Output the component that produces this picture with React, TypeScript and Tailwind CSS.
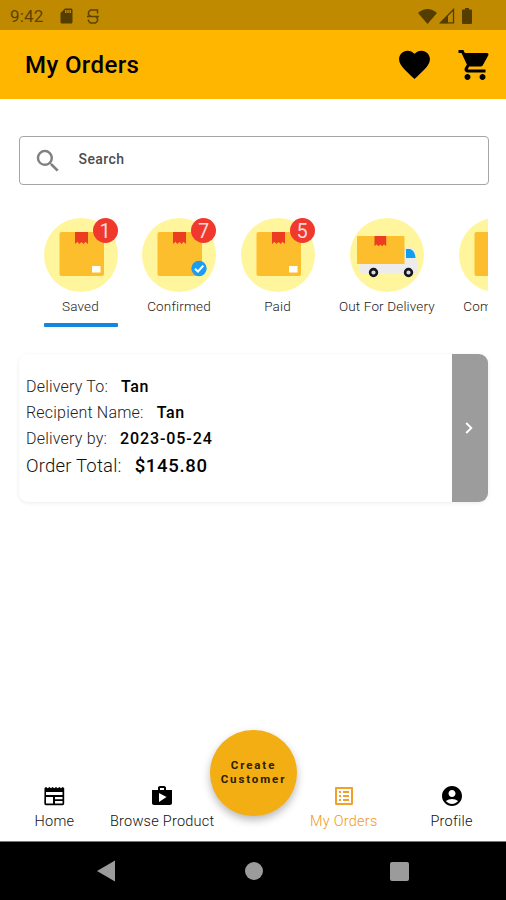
import type { ReactNode } from 'react';
import {
  MdAccountCircle,
  MdFavorite,
  MdListAlt,
  MdSearch,
  MdSdCard,
  MdShop,
  MdShoppingCart,
} from 'react-icons/md';

function StatusBar() {
  return (
    <div className="flex h-[30px] items-center bg-[#c08a00] pl-[10px] pr-[34px] pt-[2px] text-[#5e4300]">
      <span className="w-[34px] whitespace-nowrap text-[17px] leading-[20px] tracking-[0.200px]">9:42</span>
      <MdSdCard className="ml-[13px] h-[18px] w-[19px] text-[#553d00]" />
      <svg className="ml-[11px] h-[15px] w-[12px]" viewBox="0 0 12 15" fill="none" stroke="currentColor" strokeWidth="1.500">
        <path d="M10.500 4.500V0.900H3.500L1.500 3V5.500L3.500 7.400H12M0 7.400H8.500L10.500 9.500V12L8.500 14H3.500L1.500 12V10.500" />
      </svg>
      <svg className="ml-auto h-[15px] w-[19px]" viewBox="0 0 19 15" fill="#553d00">
        <path d="M0 4Q9.500-4 19 4L9.500 15Z" />
      </svg>
      <svg className="ml-[2px] h-[16px] w-[16px]" viewBox="0 0 16 16">
        <path d="M1.500 14.800L14.500 1.500V14.800Z" fill="none" stroke="#553d00" strokeWidth="1.300" />
        <path d="M1 15.200L9 7V15.200Z" fill="#553d00" />
      </svg>
      <svg className="ml-[7px] h-[16px] w-[10px]" viewBox="0 0 10 16" fill="#553d00">
        <path d="M3 0H7V1.500H9Q10 1.500 10 2.500V15Q10 16 9 16H1Q0 16 0 15V2.500Q0 1.500 1 1.500H3Z" />
      </svg>
    </div>
  );
}

function Header() {
  return (
    <header className="flex h-[69px] items-center bg-[#ffb600] pl-[25px] pr-[13px] text-black">
      <h1 className="whitespace-nowrap text-[24px] font-medium leading-[28px] tracking-[0.400px]">My Orders</h1>
      <MdFavorite className="ml-auto h-[37px] w-[37px]" />
      <MdShoppingCart className="ml-[24px] h-[36px] w-[36px]" />
    </header>
  );
}

function Ribbon() {
  return <path d="M0 0H13V12L10.500 9.800L8.700 12L6.500 10L4.300 12L2.500 9.800L0 12Z" fill="#ed3d20" />;
}

function BoxArt({ confirmed = false }: { confirmed?: boolean }) {
  return (
    <svg className="h-[74px] w-[74px]" viewBox="0 0 74 74">
      <circle cx="37" cy="37" r="37" fill="#fff59d" />
      <rect x="15.500" y="14" width="44.500" height="44" rx="2" fill="#fdbe2d" />
      <g transform="translate(31 14)">
        <Ribbon />
      </g>
      {confirmed ? (
        <g>
          <circle cx="57" cy="50.500" r="7.700" fill="#1e9cf0" />
          <path d="M53 50.700L56 53.500L61.300 47.700" fill="none" stroke="#fff" strokeWidth="2" />
        </g>
      ) : (
        <rect x="48" y="48" width="8.500" height="6.500" rx="0.500" fill="#fff" />
      )}
    </svg>
  );
}

function TruckArt() {
  return (
    <svg className="h-[74px] w-[74px]" viewBox="0 0 74 74">
      <circle cx="37" cy="37" r="37" fill="#fff59d" />
      <path d="M10 45H54V30H61Q66 31 66 39L67 43V55H12Q10 55 10 53Z" fill="#ececec" />
      <rect x="7" y="18" width="47.500" height="28" rx="1" fill="#fdbe2d" />
      <g transform="translate(24.500 18) scale(0.900 0.850)">
        <Ribbon />
      </g>
      <path d="M56 31H60Q65 33 65.500 40H56Z" fill="#109fee" />
      <circle cx="23.500" cy="54.500" r="3.400" fill="#d5dfe8" stroke="#16161c" strokeWidth="2.600" />
      <circle cx="58.500" cy="54.500" r="3.400" fill="#d5dfe8" stroke="#16161c" strokeWidth="2.600" />
    </svg>
  );
}

function HomeIcon() {
  return (
    <svg className="h-[24px] w-[24px]" viewBox="0 0 24 24">
      <path
        fill="#000"
        d="M2.500 4L4 3L5.700 4.300L7.300 3L9 4.300L10.600 3L12.300 4.300L14 3L15.700 4.300L17.300 3L19 4.300L20.500 3L22.200 4V19.500Q22.200 21.200 20.500 21.200H4Q2.300 21.200 2.300 19.500ZM4 8V11H20.500V8ZM4 13V19.500H11V13ZM13 13V15.300H20.500V13ZM13 17V19.500H20.500V17Z"
      />
    </svg>
  );
}

type CategoryProps = { label: string; art: ReactNode; count?: number; active?: boolean };

function Category({ label, art, count, active }: CategoryProps) {
  return (
    <div className="flex shrink-0 flex-col items-center">
      <div className="relative">
        {art}
        {count !== undefined && (
          <span className="absolute left-[49px] top-0 flex h-[25px] w-[25px] items-center justify-center rounded-full bg-[#f1382d] pt-px text-[20px] leading-none text-[#f3d9dc]">
            {count}
          </span>
        )}
      </div>
      <span className="mt-[6px] whitespace-nowrap text-[13.500px] font-light leading-[16px] tracking-[0.150px] text-[#222]">{label}</span>
      {active && <div className="mt-[9px] h-[4px] w-[74px] rounded-[1px] bg-[#1586e0]" />}
    </div>
  );
}

function Field({ label, value, wide = false }: { label: string; value: string; wide?: boolean }) {
  return (
    <div className="flex h-[26px] items-center whitespace-nowrap text-[16px]">
      <span className="font-light tracking-[0.200px] text-[#222]">{label}</span>
      <span className={`ml-[13px] font-medium text-black ${wide ? 'tracking-[0.900px]' : 'tracking-[0.600px]'}`}>{value}</span>
    </div>
  );
}

function OrderCard() {
  return (
    <article className="ml-[19px] mr-[18px] mt-[27px] flex h-[148px] shrink-0 overflow-hidden rounded-[9px] bg-white shadow-[0_1px_4px_rgba(0,0,0,0.08)]">
      <div className="flex-1 pl-[7px] pt-[20px]">
        <Field label="Delivery To:" value="Tan" />
        <Field label="Recipient Name:" value="Tan" />
        <Field label="Delivery by:" value="2023-05-24" wide />
        <div className="flex h-[29px] items-center whitespace-nowrap text-[18.500px]">
          <span className="font-light tracking-[0.200px] text-[#111]">Order Total:</span>
          <span className="ml-[13px] font-medium tracking-[0.700px] text-black">$145.80</span>
        </div>
      </div>
      <div className="flex w-[36px] items-center justify-center bg-[#9c9c9c]">
        <svg className="mr-[3px] h-[12px] w-[8px]" viewBox="0 0 8 12" fill="none" stroke="#fff" strokeWidth="1.900">
          <path d="M1.200 1L6.300 6L1.200 11" />
        </svg>
      </div>
    </article>
  );
}

function NavItem({ icon, label, className }: { icon: ReactNode; label: string; className: string }) {
  return (
    <div className={`flex flex-col items-center ${className}`}>
      {icon}
      <span className="mt-[5px] whitespace-nowrap text-[14.500px] font-light leading-[18px] tracking-[0.250px]">{label}</span>
    </div>
  );
}

function BottomNav() {
  return (
    <nav className="relative flex h-[58px] items-start border-b border-[#777] bg-white">
      <NavItem className="w-[109px] text-[#111]" label="Home" icon={<HomeIcon />} />
      <NavItem className="w-[107px] text-[#111]" label="Browse Product" icon={<MdShop className="h-[24px] w-[24px] text-black" />} />
      <div className="w-[75px]" />
      <NavItem className="w-[107px] text-[#f2981b]" label="My Orders" icon={<MdListAlt className="h-[24px] w-[24px] text-[#f2a02b]" />} />
      <NavItem className="w-[109px] text-[#111]" label="Profile" icon={<MdAccountCircle className="h-[24px] w-[24px] text-black" />} />
      <button className="absolute left-[210px] top-[-54px] flex h-[86px] w-[87px] flex-col items-center justify-center rounded-full bg-[#f3ae14] pb-[2px] text-[11.500px] font-bold leading-[14px] tracking-[1.900px] text-[#2b2000] shadow-[0_4px_9px_rgba(0,0,0,0.28)]">
        <span>Create</span>
        <span>Customer</span>
      </button>
    </nav>
  );
}

function SystemBar() {
  return (
    <div className="flex h-[58px] items-center bg-black pl-[97px] pr-[97px]">
      <svg className="h-[22px] w-[18px]" viewBox="0 0 18 22" fill="#9b9b9b">
        <path d="M0 11L18 0.500V21.500Z" />
      </svg>
      <div className="ml-[130px] h-[18px] w-[18px] rounded-full bg-[#9b9b9b]" />
      <div className="ml-[127px] h-[19px] w-[19px] shrink-0 rounded-[2px] bg-[#9b9b9b]" />
    </div>
  );
}

export default function App() {
  return (
    <div className="flex h-[900px] w-[506px] flex-col overflow-hidden bg-white font-['Roboto',sans-serif]">
      <StatusBar />
      <Header />
      <div className="ml-[19px] mr-[17px] mt-[37px] flex h-[49px] shrink-0 items-center rounded-[4px] border border-[#a5a5a5] pl-[13px]">
        <MdSearch className="h-[30px] w-[30px] text-[#808080]" />
        <span className="mb-[3px] ml-[15.500px] text-[14px] font-medium leading-[18px] tracking-[0.400px] text-[#4c4c4c]">Search</span>
      </div>
      <section className="ml-[19px] mr-[18px] mt-[33px] flex h-[109px] shrink-0 items-start gap-[24.500px] overflow-hidden pl-[24.500px]">
        <Category label="Saved" art={<BoxArt />} count={1} active />
        <Category label="Confirmed" art={<BoxArt confirmed />} count={7} />
        <Category label="Paid" art={<BoxArt />} count={5} />
        <Category label="Out For Delivery" art={<TruckArt />} />
        <Category label="Completed" art={<BoxArt />} />
      </section>
      <OrderCard />
      <div className="flex-1" />
      <BottomNav />
      <SystemBar />
    </div>
  );
}
